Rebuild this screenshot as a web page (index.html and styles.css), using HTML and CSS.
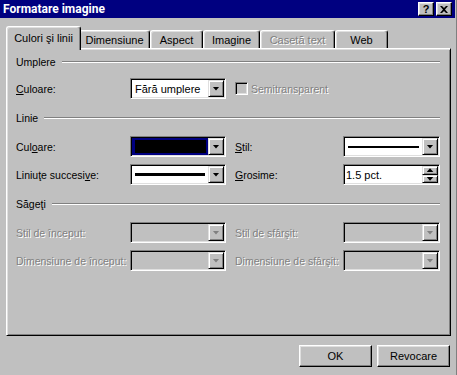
FILE: index.html
```html
<!DOCTYPE html>
<html lang="ro">
<head>
    <meta charset="UTF-8">
    <meta name="viewport" content="width=device-width, initial-scale=1.0">
    <title>Formatare imagine</title>
    <link rel="stylesheet" href="styles.css">
</head>
<body>
    <div class="window">
        <div class="titlebar">
            <span class="title">Formatare imagine</span>
            <div class="caption-buttons">
                <div class="cap-btn">?</div>
                <div class="cap-btn">
                    <svg width="8" height="7" viewBox="0 0 8 7">
                        <path d="M0 0h2l2 2 2-2h2L5 3.5 8 7H6L4 5 2 7H0l3-3.5z" fill="#000"/>
                    </svg>
                </div>
            </div>
        </div>

        <div class="tabs">
            <div class="tab active tab-culori">Culori şi linii</div>
            <div class="tab tab-dim">Dimensiune</div>
            <div class="tab tab-aspect">Aspect</div>
            <div class="tab tab-imagine">Imagine</div>
            <div class="tab tab-caseta disabled">Casetă text</div>
            <div class="tab tab-web">Web</div>
        </div>

        <div class="panel">
            <div class="group-head"><span>Umplere</span><div class="rule"></div></div>
            <div class="row row-first">
                <span><u>C</u>uloare:</span>
                <div class="combo">
                    <div class="combo-field">Fără umplere</div>
                    <div class="arrow"></div>
                </div>
                <div class="check-cell">
                    <span class="checkbox"></span>
                    <span class="disabled">Semitransparent</span>
                </div>
            </div>

            <div class="group-head head-linie"><span>Linie</span><div class="rule"></div></div>
            <div class="row row-after-head">
                <span>Cul<u>o</u>are:</span>
                <div class="combo">
                    <div class="combo-field color-field"><div class="swatch"></div></div>
                    <div class="arrow"></div>
                </div>
                <span class="right-label"><u>S</u>til:</span>
                <div class="combo">
                    <div class="combo-field"><div class="line-sample thin"></div></div>
                    <div class="arrow"></div>
                </div>
            </div>
            <div class="row row-next">
                <span>Liniuţe succesi<u>v</u>e:</span>
                <div class="combo">
                    <div class="combo-field"><div class="line-sample"></div></div>
                    <div class="arrow"></div>
                </div>
                <span class="right-label"><u>G</u>rosime:</span>
                <div class="combo">
                    <div class="combo-field spin-field">1.5 pct.</div>
                    <div class="spin-buttons">
                        <div class="spin-btn up"></div>
                        <div class="spin-btn down"></div>
                    </div>
                </div>
            </div>

            <div class="group-head head-sageti"><span>Săgeţi</span><div class="rule"></div></div>
            <div class="row row-after-head">
                <span class="disabled">Stil de început:</span>
                <div class="combo off">
                    <div class="combo-field"></div>
                    <div class="arrow"></div>
                </div>
                <span class="right-label disabled">Stil de sfârşit:</span>
                <div class="combo off">
                    <div class="combo-field"></div>
                    <div class="arrow"></div>
                </div>
            </div>
            <div class="row row-next">
                <span class="disabled">Dimensiune de început:</span>
                <div class="combo off">
                    <div class="combo-field"></div>
                    <div class="arrow"></div>
                </div>
                <span class="right-label disabled">Dimensiune de sfârşit:</span>
                <div class="combo off">
                    <div class="combo-field"></div>
                    <div class="arrow"></div>
                </div>
            </div>
        </div>

        <div class="footer">
            <button class="btn">OK</button>
            <button class="btn">Revocare</button>
        </div>
    </div>
</body>
</html>
```

FILE: styles.css
```css
* {
    box-sizing: border-box;
}

body {
    margin: 0;
    background-color: #c0c0c0;
    font-family: "Liberation Sans", Arial, sans-serif;
    font-size: 10.5px;
    color: #000;
}

.window {
    width: 457px;
    height: 375px;
    background-color: #c0c0c0;
    padding-right: 2px;
    display: flex;
    flex-direction: column;
    box-shadow: inset -1px 0 #808080;
    overflow: hidden;
}

/* title bar */
.titlebar {
    height: 18px;
    flex-shrink: 0;
    background-color: #000080;
    color: #fff;
    display: flex;
    align-items: center;
    justify-content: space-between;
    padding: 0 3px;
}

.title {
    font-family: Roboto, "Liberation Sans", sans-serif;
    font-weight: bold;
    font-size: 12px;
}

.caption-buttons {
    display: flex;
    gap: 2px;
}

.cap-btn {
    width: 16px;
    height: 14px;
    background-color: #c0c0c0;
    color: #000;
    border: 1px solid;
    border-color: #fff #000 #000 #fff;
    box-shadow: inset -1px -1px #808080, inset 1px 1px #dfdfdf;
    display: flex;
    align-items: center;
    justify-content: center;
    font-weight: bold;
    font-size: 11px;
    line-height: 1;
}

/* tabs */
.tabs {
    display: flex;
    align-items: flex-end;
    height: 22px;
    margin-top: 8px;
    padding-left: 8px;
    flex-shrink: 0;
}

.tab {
    height: 18px;
    display: flex;
    align-items: center;
    justify-content: center;
    background-color: #c0c0c0;
    border-top: 1px solid #fff;
    border-left: 1px solid #fff;
    border-right: 1px solid #000;
    border-radius: 3px 3px 0 0;
    box-shadow: inset -1px 0 #808080, inset 1px 1px #dfdfdf;
    white-space: nowrap;
    font-size: 11px;
}

.tab.active {
    height: 24px;
    margin: 0 -2px -2px -2px;
    padding-bottom: 2px;
    z-index: 1;
}

.tab-culori { width: 75px; }
.tab-dim { width: 71px; }
.tab-aspect { width: 53px; }
.tab-imagine { width: 57px; }
.tab-caseta { width: 75px; }
.tab-web { width: 53px; }

.disabled {
    color: #808080;
    text-shadow: 1px 1px 0 #fff;
}

/* panel */
.panel {
    margin-left: 6px;
    width: 445px;
    height: 288px;
    flex-shrink: 0;
    border: 1px solid;
    border-color: #fff #000 #000 #fff;
    box-shadow: inset 1px 1px #dfdfdf, inset -1px -1px #808080;
    padding: 6px 0 0 9px;
}

.group-head {
    width: 424px;
    height: 14px;
    display: flex;
    align-items: center;
    gap: 6px;
}

.head-linie,
.head-sageti {
    margin-top: 12px;
}

.rule {
    flex: 1;
    height: 2px;
    border-top: 1px solid #808080;
    border-bottom: 1px solid #fff;
}

.row {
    display: grid;
    grid-template-columns: 114px 96px 117px 97px;
    height: 21px;
    align-items: center;
    white-space: nowrap;
}

.row-first {
    margin-top: 9px;
}

.row-after-head {
    margin-top: 11px;
}

.row-next {
    margin-top: 7px;
}

.right-label {
    padding-left: 9px;
}

.check-cell {
    grid-column: 3 / span 2;
    display: flex;
    align-items: center;
    gap: 3px;
    padding-left: 9px;
}

.checkbox {
    width: 13px;
    height: 13px;
    border: 1px solid;
    border-color: #808080 #fff #fff #808080;
    box-shadow: inset 1px 1px #000, inset -1px -1px #dfdfdf;
    background-color: #c0c0c0;
}

/* combo boxes */
.combo {
    height: 21px;
    display: flex;
    border: 1px solid;
    border-color: #808080 #fff #fff #808080;
    box-shadow: inset 1px 1px #000, inset -1px -1px #dfdfdf;
    padding: 1px;
}

.combo-field {
    flex: 1;
    min-width: 0;
    background-color: #fff;
    display: flex;
    align-items: center;
    padding: 0 3px;
    overflow: hidden;
    font-size: 11px;
}

.combo.off .combo-field {
    background-color: #c0c0c0;
}

.color-field {
    background-color: #000080;
    padding: 2px 2px 2px 3px;
}

.swatch {
    flex: 1;
    height: 100%;
    background-color: #000;
}

.line-sample {
    flex: 1;
    height: 3px;
    background-color: #000;
}

.line-sample.thin {
    height: 2px;
}

.spin-field {
    padding-left: 1px;
}

.arrow,
.spin-btn {
    width: 16px;
    background-color: #c0c0c0;
    border: 1px solid;
    border-color: #dfdfdf #000 #000 #dfdfdf;
    box-shadow: inset 1px 1px #fff, inset -1px -1px #808080;
    display: flex;
    align-items: center;
    justify-content: center;
}

.arrow::after {
    content: "";
    width: 7px;
    height: 4px;
    background-color: #000;
    clip-path: polygon(0 0, 100% 0, 50% 100%);
}

.combo.off .arrow::after {
    background-color: #808080;
}

.spin-buttons {
    width: 16px;
    display: flex;
    flex-direction: column;
}

.spin-btn {
    flex: 1;
}

.spin-btn::after {
    content: "";
    width: 7px;
    height: 4px;
    background-color: #000;
}

.spin-btn.up::after {
    clip-path: polygon(50% 0, 100% 100%, 0 100%);
}

.spin-btn.down::after {
    clip-path: polygon(0 0, 100% 0, 50% 100%);
}

/* bottom buttons */
.footer {
    display: flex;
    justify-content: flex-end;
    gap: 5px;
    margin-top: 9px;
    padding-right: 5px;
}

.btn {
    width: 73px;
    height: 22px;
    background-color: #c0c0c0;
    border: 1px solid;
    border-color: #fff #000 #000 #fff;
    box-shadow: inset -1px -1px #808080, inset 1px 1px #dfdfdf;
    font-family: inherit;
    font-size: 11px;
    color: #000;
    padding: 0;
}
```
